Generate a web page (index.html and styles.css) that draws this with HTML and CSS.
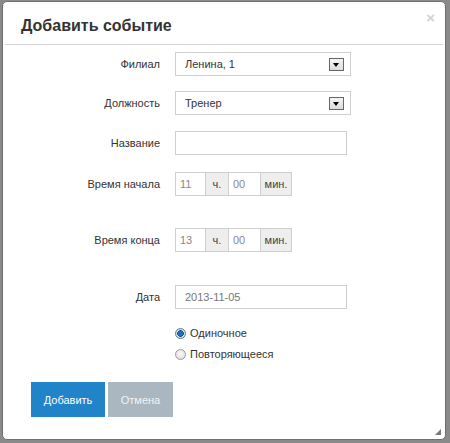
FILE: index.html
```html
<!DOCTYPE html>
<html lang="ru">
<head>
<meta charset="utf-8">
<title>Добавить событие</title>
<link rel="stylesheet" href="styles.css">
</head>
<body>
<div class="dialog">
  <div class="header">
    <h3 class="title">Добавить событие</h3>
    <span class="close">×</span>
  </div>
  <div class="body">
    <div class="row r1">
      <label class="label">Филиал</label>
      <div class="select w176"><span class="val">Ленина, 1</span><span class="arrow"></span></div>
    </div>
    <div class="row r2">
      <label class="label">Должность</label>
      <div class="select w176"><span class="val">Тренер</span><span class="arrow"></span></div>
    </div>
    <div class="row r3">
      <label class="label">Название</label>
      <div class="input w172"></div>
    </div>
    <div class="row r4">
      <label class="label">Время начала</label>
      <div class="group">
        <div class="input small">11</div><div class="addon">ч.</div><div class="input small2">00</div><div class="addon addon2">мин.</div>
      </div>
    </div>
    <div class="row r5">
      <label class="label">Время конца</label>
      <div class="group">
        <div class="input small">13</div><div class="addon">ч.</div><div class="input small2">00</div><div class="addon addon2">мин.</div>
      </div>
    </div>
    <div class="row r6">
      <label class="label">Дата</label>
      <div class="input w172 grey">2013-11-05</div>
    </div>
    <div class="radios">
      <div class="radio"><span class="dot on"></span>Одиночное</div>
      <div class="radio"><span class="dot"></span>Повторяющееся</div>
    </div>
    <div class="buttons">
      <button class="btn primary">Добавить</button>
      <button class="btn cancel">Отмена</button>
    </div>
  </div>
  <span class="grip"></span>
</div>
</body>
</html>
```
FILE: styles.css
```css
html, body {
  margin: 0;
  padding: 0;
}
body {
  background: #8a8a8a;
  width: 450px;
  height: 443px;
  overflow: hidden;
  font-family: "Liberation Sans", Arial, sans-serif;
  font-size: 11px;
  color: #333;
}
.dialog {
  position: relative;
  margin: 1px 0 0 2px;
  width: 442px;
  height: 437px;
  background: #fff;
  border: 1px solid #6f6f6f;
  border-radius: 5px;
  box-sizing: content-box;
}
.header {
  position: relative;
  height: 42px;
  margin: 0 2px 0 2px;
  border-bottom: 1px solid #d4d4d4;
}
.title {
  margin: 0;
  padding: 15px 0 0 16px;
  font-size: 16px;
  font-weight: bold;
  color: #333;
  line-height: 18px;
}
.close {
  position: absolute;
  right: 8px;
  top: 8px;
  font-size: 15px;
  font-weight: bold;
  color: #d3d3d3;
  line-height: 16px;
}
.body {
  padding-top: 7px;
}
.row {
  display: flex;
  align-items: center;
  height: 24px;
}
.r2 { margin-top: 15px; }
.r3 { margin-top: 16px; }
.r4 { margin-top: 17px; }
.r5 { margin-top: 32px; }
.r6 { margin-top: 33px; }
.label {
  width: 172px;
  text-align: right;
  padding-right: 15px;
  box-sizing: border-box;
  color: #333;
}
.select, .input {
  height: 24px;
  box-sizing: border-box;
  border: 1px solid #cfcfcf;
  background: #fff;
  display: flex;
  align-items: center;
  padding-left: 9px;
  color: #333;
}
.w176 { width: 176px; }
.w172 { width: 172px; }
.val { flex: 1; }
.arrow {
  width: 15px;
  height: 13px;
  box-sizing: border-box;
  border: 1px solid #666;
  background: linear-gradient(#f4f4f4, #dcdcdc);
  margin-right: 6px;
  position: relative;
}
.arrow::after {
  content: "";
  position: absolute;
  left: 3px;
  top: 4px;
  border-left: 3.5px solid transparent;
  border-right: 3.5px solid transparent;
  border-top: 4px solid #000;
}
.group { display: flex; }
.small { width: 31px; padding-left: 4px; color: #888; }
.small2 { width: 33px; padding-left: 4px; color: #888; }
.addon {
  height: 24px;
  box-sizing: border-box;
  width: 22px;
  background: #eee;
  border: 1px solid #cfcfcf;
  border-left: 0;
  border-right: 0;
  display: flex;
  align-items: center;
  justify-content: center;
  color: #444;
}
.addon2 {
  width: 31px;
  border-right: 1px solid #cfcfcf;
}
.grey { color: #777; }
.radios {
  margin-top: 17px;
  padding-left: 172px;
}
.radio {
  display: flex;
  align-items: center;
  height: 14px;
  margin-bottom: 7px;
  color: #333;
}
.dot {
  width: 11px;
  height: 11px;
  border-radius: 50%;
  box-sizing: border-box;
  border: 1px solid #9a9a9a;
  background: radial-gradient(circle at 50% 40%, #fafafa, #d8d8d8);
  margin-right: 4px;
  position: relative;
}
.dot.on {
  border-color: #5a7a9a;
  background: radial-gradient(circle at 50% 50%, #1f6fb8 0 2.5px, #0b3f6f 3px, #dfe8f0 3.5px, #bfcbd6);
}
.buttons {
  display: flex;
  gap: 3px;
  margin-top: 21px;
  padding-left: 28px;
}
.btn {
  height: 35px;
  border: 0;
  font-family: "Liberation Sans", Arial, sans-serif;
  font-size: 11px;
  color: #fff;
  padding: 0;
}
.primary { width: 74px; background: #2184c8; }
.cancel { width: 65px; background: #abb7c0; color: #f2f2f2; }
.grip {
  position: absolute;
  right: 4px;
  bottom: 4px;
  width: 0;
  height: 0;
  border-left: 6px solid transparent;
  border-bottom: 6px solid #777;
}
```
